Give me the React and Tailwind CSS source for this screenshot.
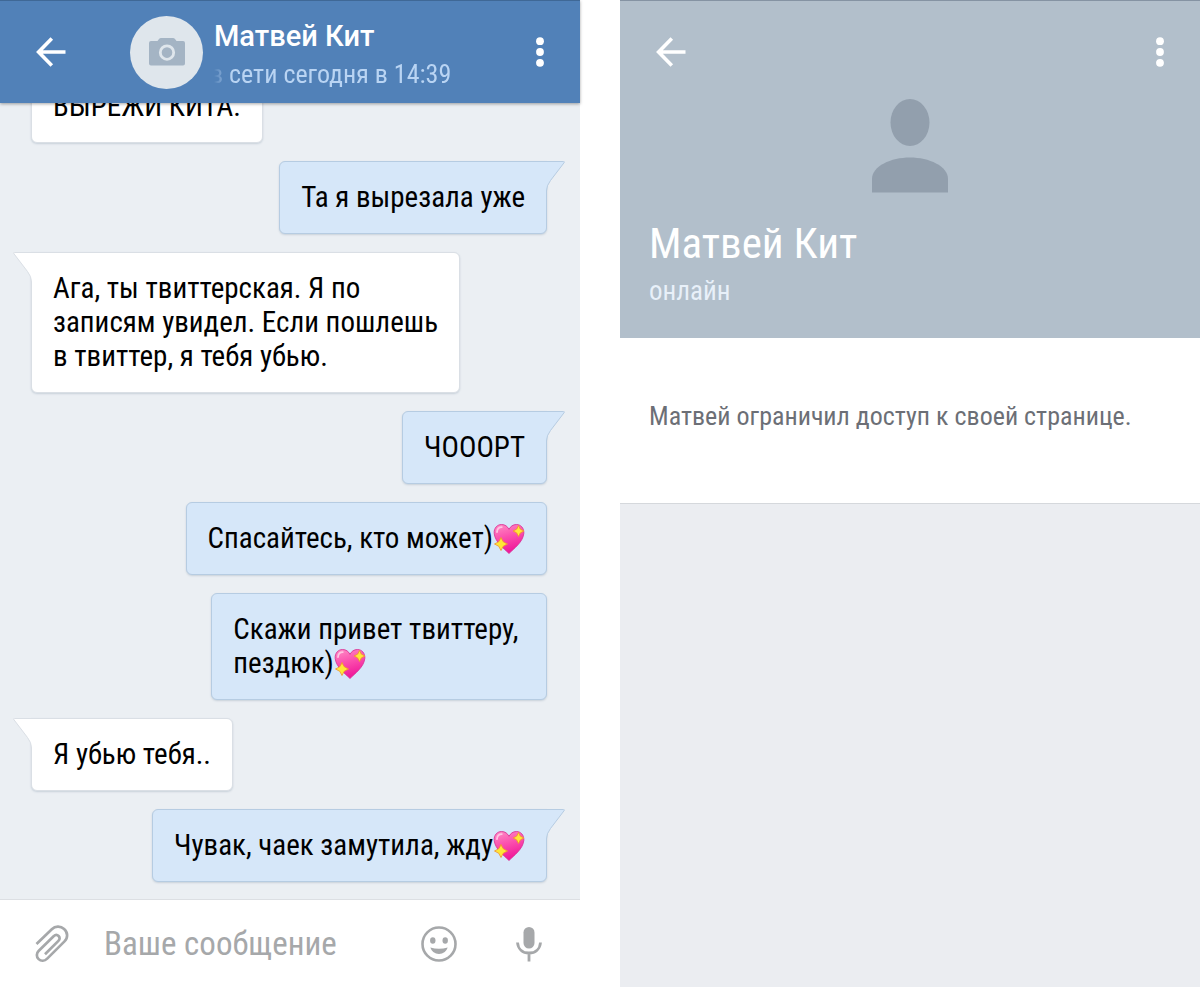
import React from "react";
import clsx from "clsx";

const MESSAGES = [
  { id: 1, text: "ВЫРЕЖИ КИТА.", out: false, tail: false },
  { id: 2, text: "Та я вырезала уже", out: true, tail: true },
  { id: 3, text: "Ага, ты твиттерская. Я по\nзаписям увидел. Если пошлешь\nв твиттер, я тебя убью.", out: false, tail: true },
  { id: 4, text: "ЧОООРТ", out: true, tail: true },
  { id: 5, text: "Спасайтесь, кто может)", out: true, tail: false, heart: true },
  { id: 6, text: "Скажи привет твиттеру, \nпездюк)", out: true, tail: false, heart: true },
  { id: 7, text: "Я убью тебя..", out: false, tail: true },
  { id: 8, text: "Чувак, чаек замутила, жду", out: true, tail: true, heart: true },
];

const BackIcon = () => (
  <svg width="30" height="30" viewBox="0 0 30 30" fill="none" stroke="currentColor" strokeWidth="3.6" aria-hidden="true">
    <path d="M29.5 15H3M15.8 1.6 2.6 15l13.2 13.4" />
  </svg>
);

const DotsIcon = () => (
  <svg width="8" height="30" viewBox="0 0 8 30" fill="currentColor" aria-hidden="true">
    <circle cx="4" cy="4.2" r="3.9" />
    <circle cx="4" cy="15" r="3.9" />
    <circle cx="4" cy="25.8" r="3.9" />
  </svg>
);

const CameraIcon = () => (
  <svg width="36" height="28" viewBox="0 0 36 28" aria-hidden="true">
    <path
      fill="#a4b4c4"
      d="M2 3h6.500l1.500-2Q10.800 0 12 0h12q1.200 0 2 1l1.500 2H34q2 0 2 2v20.500q0 2-2 2H2q-2 0-2-2V5q0-2 2-2Z"
    />
    <circle cx="18" cy="14.600" r="6.700" fill="none" stroke="#dfe6ec" strokeWidth="2.800" />
  </svg>
);

const HeartIcon = () => (
  <svg className="inline-block align-[-7px]" width="32" height="32" viewBox="0 0 32 32" role="img" aria-label="💖">
    <defs>
      <linearGradient id="heart" x1="0" y1="0" x2="0.3" y2="1">
        <stop offset="0" stopColor="#ff8fc6" />
        <stop offset="0.5" stopColor="#fb4fae" />
        <stop offset="1" stopColor="#f0189a" />
      </linearGradient>
    </defs>
    <path
      d="M16 30.500C11 25.500 2 19 1.200 10.500 0.700 5 4.300 1.500 8.600 1.500c3.400 0 6 2 7.400 4.800C17.400 3.500 20 1.500 23.400 1.500c4.300 0 7.900 3.500 7.400 9C30 19 21 25.500 16 30.500Z"
      fill="url(#heart)"
      stroke="#d8288f"
      strokeWidth="0.8"
    />
    <path d="M4 9c.2-3 2.200-4.900 4.800-4.900" stroke="#ffc4e2" strokeWidth="1.800" strokeLinecap="round" fill="none" />
    <path d="M8 14.500q1.300 5.200 6.500 6.500-5.200 1.300-6.500 6.500-1.300-5.200-6.500-6.500 5.200-1.300 6.500-6.500Z" fill="#ffe736" stroke="#f29b2c" strokeWidth="0.900" />
    <path d="M25.500 2.500q1 4.500 5.500 5.500-4.500 1-5.500 5.500-1-4.500-5.500-5.500 4.500-1 5.500-5.500Z" fill="#ffe736" stroke="#f29b2c" strokeWidth="0.900" />
  </svg>
);

const ClipIcon = () => (
  <svg width="34" height="38" viewBox="0 0 34 38" fill="none" stroke="#a6a8aa" strokeWidth="2.700" aria-hidden="true">
    <path d="M1.500 19 16.800 4.300c3.400-3.300 8.700-3.500 12.300-.3 3.900 3.400 4 8.900.4 12.400L12.200 33.600c-2.700 2.700-6.200 2.800-8.600.5-2.400-2.300-2.300-5.900.2-8.300L18.600 11.200c1.600-1.500 3.600-1.600 5-.2 1.400 1.400 1.300 3.400-.2 4.900L10 29.200" />
  </svg>
);

const SmileIcon = () => (
  <svg width="36" height="36" viewBox="0 0 36 36" aria-hidden="true">
    <circle cx="18" cy="18" r="16.500" fill="none" stroke="#a6a8aa" strokeWidth="2.600" />
    <g fill="#a6a8aa">
      <ellipse cx="11.800" cy="14.500" rx="2.700" ry="3.200" />
      <ellipse cx="24.200" cy="14.500" rx="2.700" ry="3.200" />
      <path d="M9.300 21.500Q18 24 26.700 21.500 24.500 28 18 28t-8.700-6.500Z" />
    </g>
  </svg>
);

const MicIcon = () => (
  <svg width="26" height="36" viewBox="0 0 26 36" aria-hidden="true">
    <rect x="7.500" y="1" width="11" height="21.500" rx="5.500" fill="#a6a8aa" />
    <path d="M1.500 16.500C2 23 6.500 27 13 27s11-4 11.500-10.500M13 27v8.500" fill="none" stroke="#a6a8aa" strokeWidth="2.800" />
  </svg>
);

const Tail = ({ out }) => (
  <svg
    className={clsx("absolute -top-px", out ? "left-full" : "right-full -scale-x-100")}
    width="21"
    height="30"
    viewBox="0 0 21 30"
    aria-hidden="true"
  >
    <path d="M0 .5h17.500q1.500 0 .5 1.300L4.500 19.500Q.5 24.500.5 30H0Z" fill={out ? "#d6e7f9" : "#ffffff"} />
    <path d="M0 .5h17.500q1.500 0 .5 1.300L4.500 19.500Q.5 24.500.5 30" fill="none" stroke={out ? "#b6cce2" : "#dadfe5"} />
  </svg>
);

const Bubble = ({ message }) => {
  const { text, out, tail, heart } = message;

  return (
    <li
      className={clsx(
        "relative shrink-0 rounded-md border px-[21px] pt-[18px] pb-[19px] text-[29px] leading-[34px] whitespace-pre text-black shadow-[0_1px_2px_rgba(60,90,120,0.2)]",
        out ? "self-end border-[#b6cce2] bg-[#d6e7f9]" : "self-start border-[#dadfe5] bg-white",
        tail && out && "rounded-tr-none",
        tail && !out && "rounded-tl-none"
      )}
    >
      {tail && <Tail out={out} />}
      {text}
      {heart && <HeartIcon />}
    </li>
  );
};

const ChatScreen = () => (
  <section className="flex min-w-0 flex-1 flex-col bg-[#ebeff3]">
    {/* Header */}
    <header className="z-10 flex h-[103px] shrink-0 items-center border-t border-[#3f6896] bg-[#5181b8] px-9 text-white shadow-[0_1px_3px_rgba(0,0,0,0.35)]">
      <button type="button" aria-label="Назад">
        <BackIcon />
      </button>
      <div className="ml-16 flex size-[73px] shrink-0 items-center justify-center rounded-full bg-[#dfe6ec]">
        <CameraIcon />
      </div>
      <div className="ml-[11px] min-w-0 flex-1 pt-2">
        <h1 className="font-[Roboto,sans-serif] text-[29px] leading-9 font-medium">Матвей Кит</h1>
        <div className="overflow-hidden [mask-image:linear-gradient(to_right,transparent,black_18px)]">
          <p className="-ml-1 text-[26px] leading-10 whitespace-nowrap text-[#b9d4f3]">в сети сегодня в 14:39</p>
        </div>
      </div>
      <button type="button" aria-label="Меню">
        <DotsIcon />
      </button>
    </header>

    {/* Messages */}
    <ul className="flex min-h-0 flex-1 flex-col justify-end gap-[18px] overflow-hidden pr-[33px] pb-[17px] pl-[31px]">
      {MESSAGES.map((message) => (
        <Bubble key={message.id} message={message} />
      ))}
    </ul>

    {/* Composer */}
    <form className="flex h-[88px] shrink-0 items-center border-t border-[#dcdfe3] bg-white pr-[38px] pl-[35px]" onSubmit={(e) => e.preventDefault()}>
      <button type="button" aria-label="Прикрепить">
        <ClipIcon />
      </button>
      <input
        type="text"
        aria-label="Ваше сообщение"
        placeholder="Ваше сообщение"
        className="ml-[35px] min-w-0 flex-1 text-[33px] leading-10 outline-none placeholder:text-[#a6a8aa]"
      />
      <button type="button" aria-label="Смайлы">
        <SmileIcon />
      </button>
      <button type="button" aria-label="Голосовое сообщение" className="ml-[59px]">
        <MicIcon />
      </button>
    </form>
  </section>
);

const ProfileScreen = () => (
  <section className="flex min-w-0 flex-1 flex-col bg-[#ebedf1]">
    <header className="flex flex-col border-t border-[#8593a3] bg-[#b2bfcb] pb-[26px] text-white">
      <div className="flex items-center justify-between px-9 pt-9">
        <button type="button" aria-label="Назад">
          <BackIcon />
        </button>
        <button type="button" aria-label="Меню">
          <DotsIcon />
        </button>
      </div>
      <svg className="mt-8 self-center" width="78" height="94" viewBox="0 0 78 94" fill="#929fad" aria-hidden="true">
        <ellipse cx="39" cy="23.500" rx="19.500" ry="23.500" />
        <path d="M1 93.500V80C1 67 20 58.500 39 58.500S77 67 77 80v13.500Z" />
      </svg>
      <h2 className="mt-[23px] px-[29px] text-[43px] leading-[54px]">Матвей Кит</h2>
      <p className="px-[29px] text-[27px] leading-[42px] text-[#e8f0f9]">онлайн</p>
    </header>
    <div className="border-b border-[#d5d8dc] bg-white px-[29px] pt-[60px] pb-[69px]">
      <p className="text-[26px] leading-9 text-[#6c6f76]">Матвей ограничил доступ к своей странице.</p>
    </div>
  </section>
);

export default function App() {
  return (
    <main className="flex h-screen gap-10 bg-white pb-px font-['Roboto_Condensed',Roboto,sans-serif]">
      <ChatScreen />
      <ProfileScreen />
    </main>
  );
}
